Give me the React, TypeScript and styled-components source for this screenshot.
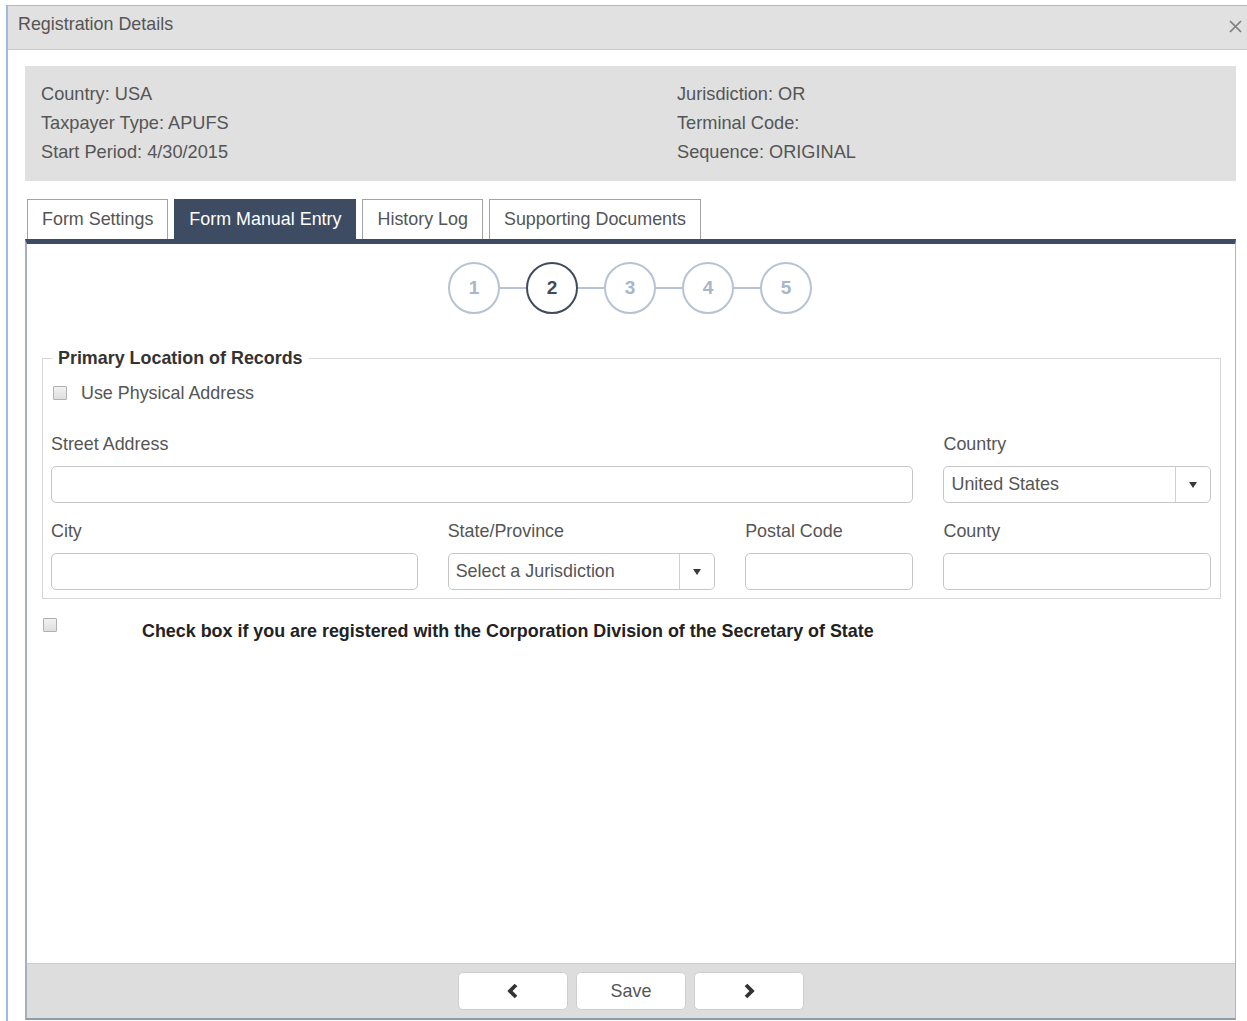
import React from 'react';
import styled, { createGlobalStyle } from 'styled-components';

const GlobalStyle = createGlobalStyle`
  html, body {
    margin: 0;
    padding: 0;
    background: #fff;
    overflow: hidden;
  }

  body {
    font-family: "Liberation Sans", Arial, sans-serif;
    font-size: 17.9px;
    color: #555;
  }

  * {
    box-sizing: border-box;
  }
`;

const gridSpan: Record<string, number> = {
  street: 9,
  country: 3,
  city: 4,
  state: 3,
  postal: 2,
  county: 3,
};

const steps = [1, 2, 3, 4, 5];
const tabs = ['Form Settings', 'Form Manual Entry', 'History Log', 'Supporting Documents'];

const Chevron = ({ dir }: { dir: 'left' | 'right' }) => (
  <svg width="14" height="16" viewBox="0 0 14 16">
    <polyline
      points={dir === 'left' ? '10,2 4,8 10,14' : '4,2 10,8 4,14'}
      fill="none"
      stroke="#333"
      strokeWidth="3.8"
    />
  </svg>
);

const Caret = () => (
  <svg width="10" height="8" viewBox="0 0 10 8">
    <polygon points="1,1 9,1 5,7" fill="#3a3a3a" />
  </svg>
);

const App = () => {
  return (
    <>
      <GlobalStyle />
      <Window>
        <TitleBar>
          <Title>Registration Details</Title>
          <Close>
            <svg width="13" height="13" viewBox="0 0 13 13">
              <path d="M1 1 L12 12 M12 1 L1 12" stroke="#7e7e7e" strokeWidth="1.7" />
            </svg>
          </Close>
        </TitleBar>

        <Body>
          <InfoPanel>
            <InfoColumn>
              <InfoLine>Country: USA</InfoLine>
              <InfoLine>Taxpayer Type: APUFS</InfoLine>
              <InfoLine>Start Period: 4/30/2015</InfoLine>
            </InfoColumn>
            <InfoColumn>
              <InfoLine>Jurisdiction: OR</InfoLine>
              <InfoLine>Terminal Code:</InfoLine>
              <InfoLine>Sequence: ORIGINAL</InfoLine>
            </InfoColumn>
          </InfoPanel>

          <TabStrip>
            {tabs.map((t) => (
              <Tab key={t} $active={t === 'Form Manual Entry'}>
                {t}
              </Tab>
            ))}
          </TabStrip>

          <Panel>
            <Stepper>
              {steps.map((s) => (
                <React.Fragment key={s}>
                  {s > 1 && <StepLink />}
                  <StepCircle $active={s === 2}>{s}</StepCircle>
                </React.Fragment>
              ))}
            </Stepper>

            <Group>
              <Legend>Primary Location of Records</Legend>
              <CheckRow>
                <CheckBox />
                <CheckLabel>Use Physical Address</CheckLabel>
              </CheckRow>

              <FieldGrid>
                <Field $span={gridSpan.street}>
                  <FieldLabel>Street Address</FieldLabel>
                  <TextBox />
                </Field>
                <Field $span={gridSpan.country}>
                  <FieldLabel>Country</FieldLabel>
                  <Select>
                    <SelectValue>United States</SelectValue>
                    <SelectArrow>
                      <Caret />
                    </SelectArrow>
                  </Select>
                </Field>
                <Field $span={gridSpan.city}>
                  <FieldLabel>City</FieldLabel>
                  <TextBox />
                </Field>
                <Field $span={gridSpan.state}>
                  <FieldLabel>State/Province</FieldLabel>
                  <Select>
                    <SelectValue>Select a Jurisdiction</SelectValue>
                    <SelectArrow>
                      <Caret />
                    </SelectArrow>
                  </Select>
                </Field>
                <Field $span={gridSpan.postal}>
                  <FieldLabel>Postal Code</FieldLabel>
                  <TextBox />
                </Field>
                <Field $span={gridSpan.county}>
                  <FieldLabel>County</FieldLabel>
                  <TextBox />
                </Field>
              </FieldGrid>
            </Group>

            <RegisterRow>
              <RegisterCheckCell>
                <CheckBox $flush />
              </RegisterCheckCell>
              <RegisterText>
                Check box if you are registered with the Corporation Division of the Secretary of State
              </RegisterText>
            </RegisterRow>

            <Footer>
              <NavButton>
                <Chevron dir="left" />
              </NavButton>
              <NavButton>Save</NavButton>
              <NavButton>
                <Chevron dir="right" />
              </NavButton>
            </Footer>
          </Panel>
        </Body>
      </Window>
    </>
  );
};

export default App;

const Window = styled.div`
  margin: 5px 0 0 6px;
  width: 1248px;
  border-top: 1px solid #9fbadf;
  border-left: 2px solid #9fbadf;
  min-height: 1016px;
`;

const TitleBar = styled.div`
  height: 44px;
  background: #e1e1e1;
  border-bottom: 1px solid #c9c9c9;
  display: flex;
  align-items: flex-start;
  justify-content: space-between;
  padding: 3px 12px 0 10px;
`;

const Title = styled.div`
  line-height: 30px;
  color: #555;
`;

const Close = styled.div`
  height: 30px;
  display: flex;
  align-items: center;
  padding-top: 4px;
`;

const Body = styled.div`
  padding: 16px 18px 0 17px;
`;

const InfoPanel = styled.div`
  background: #e0e0e0;
  display: grid;
  grid-template-columns: 636px 1fr;
  padding: 14px 16px 14px;
  font-size: 18.2px;
`;

const InfoColumn = styled.div`
  display: flex;
  flex-direction: column;
`;

const InfoLine = styled.div`
  line-height: 29px;
  color: #555;
`;

const TabStrip = styled.div`
  display: flex;
  gap: 6px;
  margin: 18px 0 0 2px;
`;

const Tab = styled.div<{ $active?: boolean }>`
  height: 40px;
  padding: 0 14px;
  display: flex;
  align-items: center;
  border: 1px solid ${(p) => (p.$active ? '#3d4b63' : '#a3a3a3')};
  border-bottom: none;
  background: ${(p) => (p.$active ? '#3d4b63' : '#fff')};
  color: ${(p) => (p.$active ? '#fff' : '#555')};
`;

const Panel = styled.div`
  height: 781px;
  border-top: 5px solid #3d4b63;
  border-left: 2px solid #a7afba;
  border-right: 1px solid #a9b5c6;
  border-bottom: 2px solid #8e9cb1;
  display: flex;
  flex-direction: column;
`;

const Stepper = styled.div`
  display: flex;
  justify-content: center;
  align-items: center;
  padding: 18px 2px 0 0;
`;

const StepCircle = styled.div<{ $active?: boolean }>`
  width: 52px;
  height: 52px;
  border-radius: 50%;
  border: 2px solid ${(p) => (p.$active ? '#3f4b5f' : '#b7c3d3')};
  display: flex;
  align-items: center;
  justify-content: center;
  font-weight: bold;
  font-size: 19px;
  color: ${(p) => (p.$active ? '#3f4b5f' : '#a7b6ca')};
`;

const StepLink = styled.div`
  width: 26px;
  height: 2px;
  background: #b7c3d3;
`;

const Group = styled.fieldset`
  margin: 34px 14px 0 15px;
  padding: 0 9px 8px 8px;
  border: 1px solid #d6d6d6;
  min-width: 0;
`;

const Legend = styled.legend`
  padding: 0 6px;
  margin-left: 1px;
  line-height: 20px;
  font-weight: bold;
  color: #333;
`;

const CheckRow = styled.div`
  display: flex;
  align-items: center;
  margin-top: 13px;
  height: 24px;
`;

const CheckBox = styled.span<{ $flush?: boolean }>`
  display: block;
  flex: none;
  width: 14px;
  height: 14px;
  margin-left: ${(p) => (p.$flush ? '0' : '2px')};
  border: 1px solid #b0b0b0;
  border-radius: 1px;
  background: linear-gradient(#f2f2f2, #dedede);
`;

const CheckLabel = styled.span`
  margin-left: 14px;
  color: #555;
`;

const FieldGrid = styled.div`
  display: grid;
  grid-template-columns: repeat(12, 1fr);
  column-gap: 30px;
  row-gap: 18px;
  margin-top: 29px;
`;

const Field = styled.div<{ $span: number }>`
  grid-column: span ${(p) => p.$span};
  display: flex;
  flex-direction: column;
`;

const FieldLabel = styled.label`
  line-height: 20px;
  margin-bottom: 12px;
  color: #555;
`;

const TextBox = styled.div`
  height: 37px;
  border: 1px solid #c6c6c6;
  border-radius: 5px;
  background: #fff;
`;

const Select = styled.div`
  height: 37px;
  border: 1px solid #c6c6c6;
  border-radius: 5px;
  background: #fff;
  display: flex;
`;

const SelectValue = styled.div`
  flex: 1;
  padding-left: 7px;
  line-height: 35px;
  color: #555;
`;

const SelectArrow = styled.div`
  width: 35px;
  border-left: 1px solid #d2d2d2;
  display: flex;
  align-items: center;
  justify-content: center;
`;

const RegisterRow = styled.div`
  display: flex;
  align-items: flex-start;
  margin: 18px 0 0 16px;
`;

const RegisterCheckCell = styled.div`
  width: 99px;
  padding-top: 1px;
`;

const RegisterText = styled.div`
  line-height: 28px;
  font-weight: bold;
  color: #222;
`;

const Footer = styled.div`
  margin-top: auto;
  height: 55px;
  border-top: 1px solid #cdcdcd;
  background: #dddddd;
  display: flex;
  justify-content: center;
  align-items: center;
  gap: 8px;
`;

const NavButton = styled.div`
  width: 110px;
  height: 38px;
  background: #fff;
  border: 1px solid #cfcfcf;
  border-radius: 5px;
  display: flex;
  align-items: center;
  justify-content: center;
  color: #555;
`;
